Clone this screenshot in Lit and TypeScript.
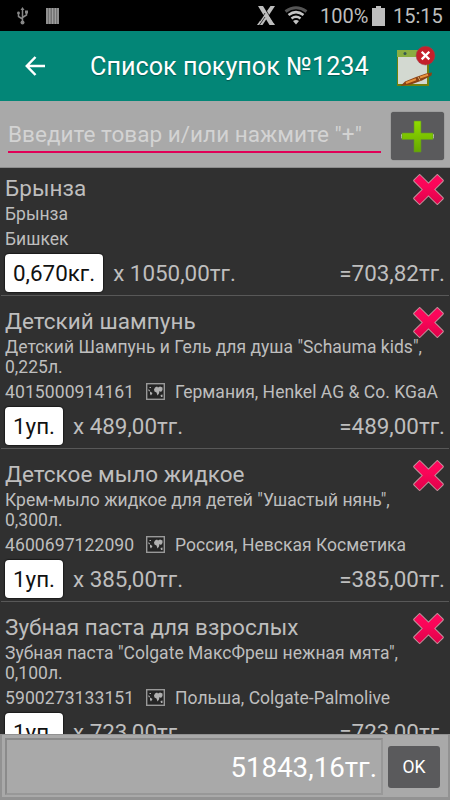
import { LitElement, html, css, svg, nothing } from "lit";
import { customElement, property } from "lit/decorators.js";

interface Item {
  title: string;
  lines: string[];
  code?: string;
  origin: string;
  qty: string;
  price: string;
  sum: string;
}

const items: Item[] = [
  { title: "Брынза", lines: ["Брынза"], origin: "Бишкек", qty: "0,670кг.", price: "x 1050,00тг.", sum: "=703,82тг." },
  { title: "Детский шампунь", lines: ['Детский Шампунь и Гель для душа "Schauma kids",', "0,225л."], code: "4015000914161", origin: "Германия, Henkel AG & Co. KGaA", qty: "1уп.", price: "x 489,00тг.", sum: "=489,00тг." },
  { title: "Детское мыло жидкое", lines: ['Крем-мыло жидкое для детей "Ушастый нянь",', "0,300л."], code: "4600697122090", origin: "Россия, Невская Косметика", qty: "1уп.", price: "x 385,00тг.", sum: "=385,00тг." },
  { title: "Зубная паста для взрослых", lines: ['Зубная паста "Colgate МаксФреш нежная мята",', "0,100л."], code: "5900273133151", origin: "Польша, Colgate-Palmolive", qty: "1уп.", price: "x 723,00тг.", sum: "=723,00тг." },
];

const crossIcon = svg`
  <defs><linearGradient id="g" x1="0" y1="0" x2="1" y2="1"><stop offset="0" stop-color="#ff0a60"/><stop offset=".45" stop-color="#fa0558"/><stop offset="1" stop-color="#cf0042"/></linearGradient></defs>
  <path transform="rotate(45 15.5 15.5)" d="M11 -.5Q11 -1.500 12 -1.500H19Q20 -1.500 20 -.5V11H31.500Q32.500 11 32.500 12V19Q32.500 20 31.500 20H20V31.500Q20 32.500 19 32.500H12Q11 32.500 11 31.500V20H-.5Q-1.500 20 -1.500 19V12Q-1.500 11 -.5 11H11Z" fill="url(#g)" stroke="#c9959f" stroke-width="1"/>`;

@customElement("shopping-item")
export class ShoppingItem extends LitElement {
  @property({ attribute: false }) item!: Item;

  static styles = css`
    :host { display: block; flex: none; height: 133px; box-sizing: border-box; padding: 10px 5px 0; position: relative; color: #bebebe; white-space: nowrap; }
    :host([tall]) { height: 153px; }
    .title { font-size: 22.5px; line-height: 30px; margin-bottom: 1px; letter-spacing: .04px; }
    .line { font-size: 17.5px; line-height: 20px; letter-spacing: .02px; }
    .meta { display: flex; align-items: center; height: 27px; font-size: 17.5px; letter-spacing: .03px; margin-top: 1px; }
    .code { width: 141px; font-size: 17.6px; letter-spacing: .05px; }
    .map { width: 19px; height: 17px; margin-right: 10px; }
    .row { display: flex; align-items: center; height: 38px; margin-top: 2px; font-size: 22.4px; }
    .qty { box-sizing: border-box; height: 38px; line-height: 38px; padding: 0 8px; background: #fff; color: #111; border-radius: 4px; box-shadow: 0 0 1px 1px #1c1c1c; }
    .price { margin-left: 10px; flex: 1; }
    .cross { position: absolute; right: 6px; top: 11px; width: 31px; height: 31px; overflow: visible; }
    .rule { position: absolute; left: 1px; right: 1px; bottom: 0; height: 1px; background: #585858; }
  `;

  render() {
    const i = this.item;
    return html`
      <div class="title">${i.title}</div>
      ${i.lines.map((l) => html`<div class="line">${l}</div>`)}
      <div class="meta">
        ${i.code
          ? html`<span class="code">${i.code}</span>
              <svg class="map" viewBox="0 0 19 17">
                <rect x=".7" y=".7" width="17.600" height="15.600" fill="#252525" stroke="#999" stroke-width="1.400"/>
                <path d="M2.500 6L4 7.500L3.500 8.500L2.500 8ZM3.500 4H5V5H3.500ZM4 8.500L6.500 10L5 12.500L4 11ZM8 6.500L9 4.500L11 3.500L12 4.500L14 3.500L16.500 4.500V7L15 9L13.500 8L13 10.500L11.500 12.500L10.500 9.500L8.500 8.500ZM14.500 12L16.500 11.500V14H15Z" fill="#b0b0b0"/>
              </svg>`
          : nothing}
        <span>${i.origin}</span>
      </div>
      <div class="row"><span class="qty">${i.qty}</span><span class="price">${i.price}</span><span>${i.sum}</span></div>
      <svg class="cross" viewBox="0 0 31 31">${crossIcon}</svg>
      <div class="rule"></div>
    `;
  }
}

@customElement("app-root")
export class AppRoot extends LitElement {
  static styles = css`
    :host { display: flex; flex-direction: column; width: 450px; height: 800px; overflow: hidden; background: #303030; font-family: Roboto, "Noto Sans", sans-serif; white-space: nowrap; }
    svg { display: block; flex: none; }
    .status { display: flex; align-items: center; height: 31px; flex: none; background: #000; color: #bdbdbd; font-size: 20px; }
    .usb { width: 12px; height: 18px; margin-left: 17px; }
    .bars { width: 13px; height: 16px; margin-left: 17px; }
    .nfc { width: 19px; height: 20px; margin-left: auto; }
    .wifi { width: 24px; height: 19px; margin: 0 12px 0 8px; }
    .pct { width: 52px; line-height: 31px; padding-top: 1px; }
    .batt { width: 13px; height: 20px; }
    .time { width: 65px; padding-left: 8px; padding-top: 1px; box-sizing: border-box; }
    .bar { display: flex; align-items: center; height: 70px; flex: none; background: #038677; color: #fff; }
    .back { width: 20px; height: 20px; margin: 0 45px 0 25px; }
    .heading { flex: 1; font-size: 25.2px; line-height: 30px; padding-top: 2px; text-shadow: 0 1px 1px #0005; }
    .note { width: 40px; height: 42px; margin-right: 14px; }
    .entry { display: flex; height: 67px; flex: none; background: #a9a9a9; box-sizing: border-box; padding: 11px 6px 0 8px; border-bottom: 1px solid #8b8b8b; }
    .field { width: 373px; height: 41px; box-sizing: border-box; border-bottom: 2px solid #e00057; color: #d3d3d3; font-size: 22.5px; line-height: 45px; letter-spacing: .03px; margin-right: 10px; }
    .add { display: flex; align-items: center; justify-content: center; width: 53px; height: 48px; background: #5a5a5c; border-radius: 3px; box-shadow: 0 0 1px #444; }
    .plus { width: 33px; height: 33px; }
    .list { display: flex; flex-direction: column; flex: 1; min-height: 0; overflow: hidden; }
    .list shopping-item:first-child { margin-top: -5px; }
    .footer { display: flex; align-items: center; height: 66px; flex: none; box-sizing: border-box; background: #a9a9a9; border: solid #929292; border-width: 1px 2px 3px 2px; padding: 0 6px 0 3px; }
    .total { width: 378px; height: 57px; box-sizing: border-box; border: 2px solid #8b8b8b; border-bottom-color: #989898; border-right-color: #989898; color: #fff; font-size: 27.7px; line-height: 55px; text-align: right; padding-right: 4px; margin-right: 5px; }
    .ok { width: 52px; height: 42px; line-height: 43px; border-radius: 3px; background: #5a5a5c; color: #fff; font-size: 17.5px; text-align: center; margin-top: 1px; }
  `;

  render() {
    return html`
      <div class="status">
        <svg class="usb" viewBox="0 0 12 18" fill="none" stroke="#888" stroke-width="1.500">
          <path d="M5.500 15V2M5.500 12L1.500 9.500V6M5.500 10.500L9.500 8V5"/><path d="M3.500 3L5.500 0L7.500 3Z" fill="#888" stroke="none"/>
          <circle cx="5.500" cy="15.500" r="2" fill="#888" stroke="none"/><circle cx="1.500" cy="6" r="1.400" fill="#888" stroke="none"/><path d="M8 3.500H11V6.500H8Z" fill="#888" stroke="none"/>
        </svg>
        <svg class="bars" viewBox="0 0 13 16"><path d="M0 0H13V16H0Z" fill="#707070"/><path d="M1 0V16M3.800 0V16M6.600 0V16M9.400 0V16M12 0V16" stroke="#a0a0a0" stroke-width="1.300"/></svg>
        <svg class="nfc" viewBox="0 0 19 20"><path d="M1 0H6L18 19H12.500Z" fill="#bdbdbd"/><path d="M18 0H13.500L0 19H5.500Z" fill="#bdbdbd"/><path d="M9.500 5L17 17M8 7L3 15M2.500 19L8 11" stroke="#000" stroke-width=".7"/></svg>
        <svg class="wifi" viewBox="0 0 24 19" fill="none" stroke-width="3">
          <path d="M1.500 5.500Q12 -2 22.500 5.500" stroke="#555"/><path d="M4.500 9Q12 3.200 19.500 9M7.500 12.500Q12 9 16.500 12.500" stroke="#c4c4c4" stroke-width="2.500"/><path d="M9 15Q12 13 15 15L12 18.500Z" fill="#c4c4c4"/>
        </svg>
        <span class="pct">100%</span>
        <svg class="batt" viewBox="0 0 13 20"><path d="M4 0H9V2H13V20H0V2H4Z" fill="#bdbdbd"/></svg>
        <span class="time">15:15</span>
      </div>
      <div class="bar">
        <svg class="back" viewBox="0 0 20 20" fill="none" stroke="#fff" stroke-width="2.500"><path d="M20 10H2M10.500 1L1.800 10L10.500 19"/></svg>
        <div class="heading">Список покупок №1234</div>
        <svg class="note" viewBox="0 0 40 42">
          <path d="M1 6H33V41H1Z" fill="#71800d"/><path d="M2 12H31V39H2Z" fill="#d3d9d1"/><path d="M1 5H33V12H1Z" fill="#8bad42"/>
          <circle cx="9" cy="8.500" r="1.500" fill="#35584f"/>
          <path d="M4.500 41L9 36.500L20 32L30 28.500L36 27.500L35.500 30.500L26 35.500L15 39.500Z" fill="#8a4215"/><path d="M10 38L20 34.300M24 32.500L32 29.700" stroke="#e8913a" stroke-width="2"/><path d="M22 31.800L24 35.500" stroke="#d9a867" stroke-width="1"/>
          <circle cx="29.500" cy="10.600" r="9.400" fill="#c4202b" stroke="#98464a" stroke-width=".5"/><path d="M25.700 6.800L33.300 14.400M33.300 6.800L25.700 14.400" stroke="#fff" stroke-width="2.300"/>
        </svg>
      </div>
      <div class="entry">
        <div class="field">Введите товар и/или нажмите "+"</div>
        <div class="add">
          <svg class="plus" viewBox="0 0 33 33">
            <defs><linearGradient id="p" x1="0" y1="0" x2="0" y2="1"><stop offset="0" stop-color="#90dc00"/><stop offset="1" stop-color="#66a800"/></linearGradient></defs>
            <path d="M1 14Q-.5 16 1 18.500M32 14Q33.500 16 32 18.500" fill="none" stroke="#ddd"/>
            <path d="M13 1H20V13H32V19.500H20V32H13V19.500H1V13H13Z" fill="url(#p)" stroke="#619328" stroke-width=".6"/>
          </svg>
        </div>
      </div>
      <div class="list">${items.map((i) => html`<shopping-item .item=${i} ?tall=${i.lines.length > 1}></shopping-item>`)}</div>
      <div class="footer"><div class="total">51843,16тг.</div><div class="ok">OK</div></div>
    `;
  }
}
